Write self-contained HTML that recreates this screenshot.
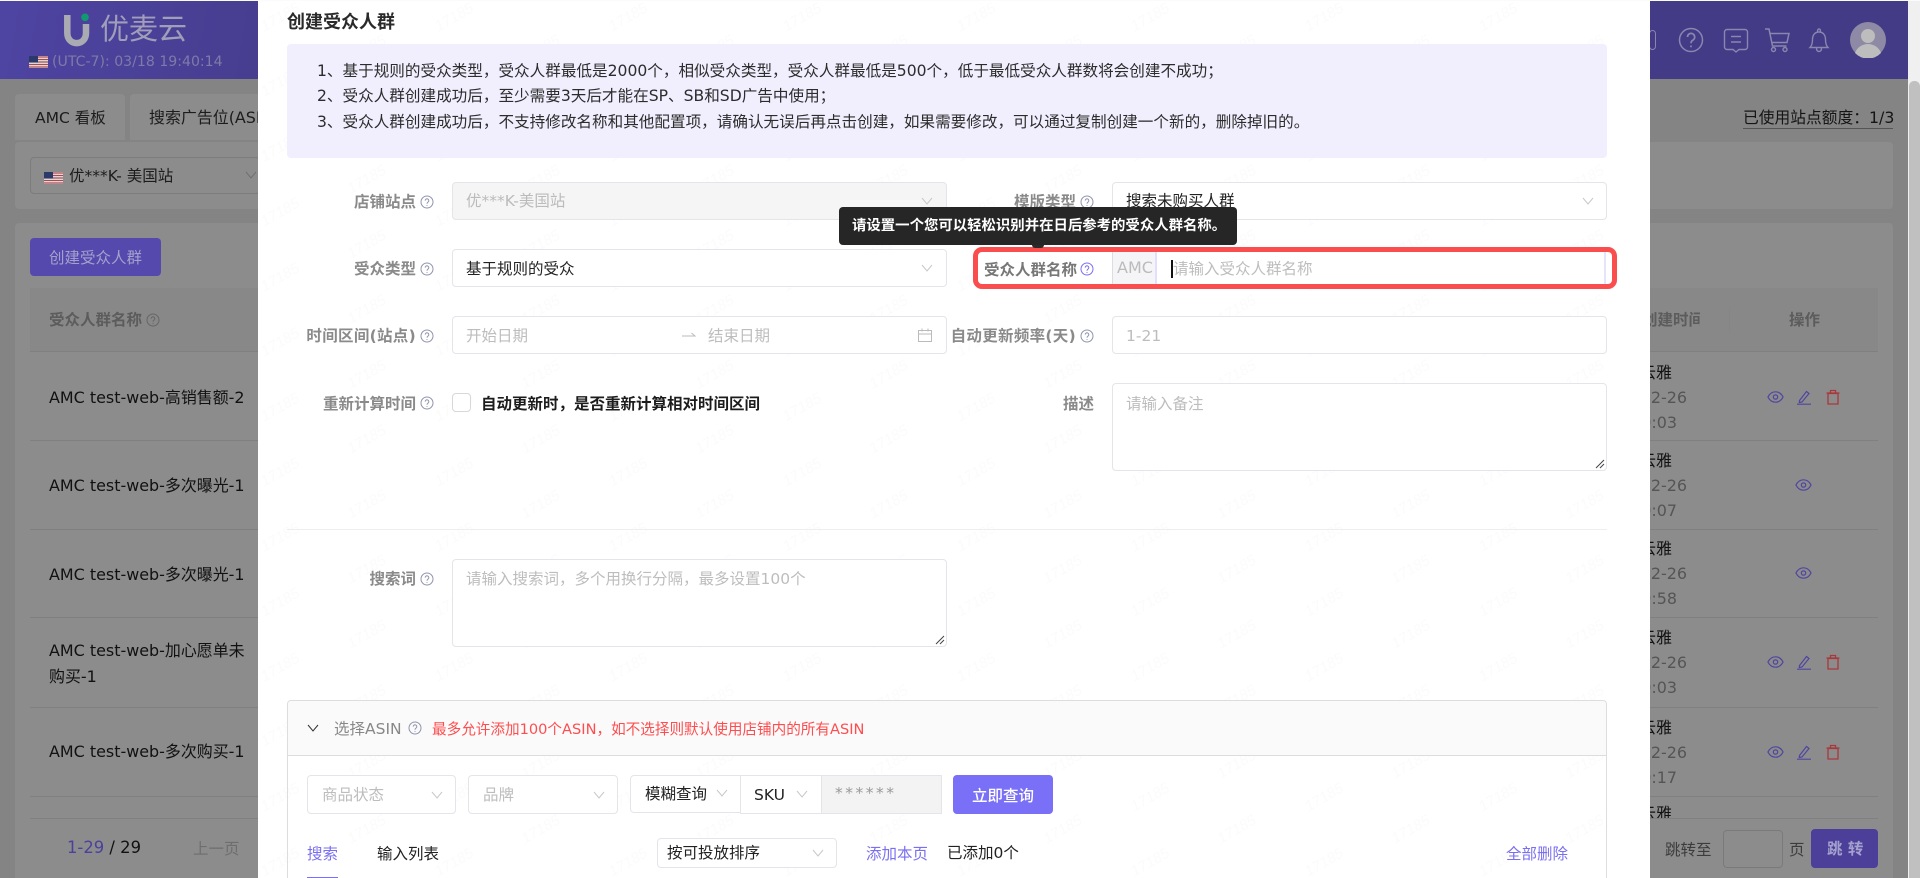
<!DOCTYPE html>
<html lang="zh"><head><meta charset="utf-8"><title>创建受众人群</title>
<style>
html,body{margin:0;padding:0;width:1920px;height:878px;overflow:hidden;background:#fff}
#r{position:relative;width:1920px;height:878px;overflow:hidden;font:15.5px/20px "DejaVu Sans","Noto Sans CJK SC",sans-serif;color:#222;filter:blur(.35px)}
#r div,#r svg{position:absolute}
.t{white-space:nowrap;height:20px}
.b{box-sizing:border-box;border:1px solid #e4e4ea;border-radius:4px;background:#fff}
.c{box-sizing:border-box;background:#8c8c8c;border-radius:4px}
.l{color:#8a8a8a;font-weight:700;text-align:right}
.g{color:#bdbdbd}
.k{color:#222}
.p{color:#7a6ff0}
.h{width:14px;height:14px;color:#8f94ae}
.v{width:14px;height:10px;color:#c8c8c8}
.d{color:#111;font-size:15.95px}
.e{color:#555;font-size:15.95px}
.hl{background:#808080;height:1px;left:30px;width:1848px}
</style></head><body>
<div id="r">
<svg width="0" height="0" style="position:absolute">
<defs>
<symbol id="q" viewBox="0 0 14 14"><circle cx="7" cy="7" r="6" fill="none" stroke="currentColor" stroke-width="1"/><path d="M5.2 5.6a1.8 1.8 0 1 1 2.8 1.5c-.7.5-1 .8-1 1.6M7 10v.9" fill="none" stroke="currentColor" stroke-width="1"/></symbol>
<symbol id="ch" viewBox="0 0 14 10"><path d="M2 2l5 6 5-6" fill="none" stroke="currentColor" stroke-width="1"/></symbol>
<symbol id="eye" viewBox="0 0 18 14"><path d="M1 7C3 3 6 1.5 9 1.5S15 3 17 7c-2 4-5 5.500-8 5.500S3 11 1 7z" fill="none" stroke="#4f45a0" stroke-width="1.300"/><circle cx="9" cy="7" r="2.300" fill="none" stroke="#4f45a0" stroke-width="1.300"/></symbol>
<symbol id="pen" viewBox="0 0 16 16"><path d="M3.500 11.500L10.500 2.500l2.500 2-7 8.500-2.700.5zM1 15.200h14" fill="none" stroke="#4f45a0" stroke-width="1.200"/></symbol>
<symbol id="tr" viewBox="0 0 16 16"><path d="M3 4.500h10V15H3zM1.500 4h13M5.500 4V1.500h5V4" fill="none" stroke="#a8383c" stroke-width="1.300"/></symbol>
<symbol id="fl" viewBox="0 0 19 12"><rect width="19" height="12" fill="#e8e8e8"/><path d="M0 1h19M0 3.500h19M0 6h19M0 8.500h19M0 11h19" stroke="#a84a50" stroke-width="1.200"/><rect width="9" height="6.500" fill="#2c3a6a"/></symbol>
<pattern id="wm" width="174" height="65" patternUnits="userSpaceOnUse" patternTransform="translate(236.5 131)">
<text x="43.5" y="21" text-anchor="middle" transform="rotate(-30 43.5 16)" font-family="Liberation Sans" font-size="15" font-style="italic" fill="#fbfbfb">17185</text>
<text x="130.5" y="53" text-anchor="middle" transform="rotate(-30 130.5 49)" font-family="Liberation Sans" font-size="15" font-style="italic" fill="#fbfbfb">17185</text>
</pattern>
</defs></svg>

<!-- background page -->
<div style="left:0;top:0;width:1920px;height:878px;background:#848484"></div>
<div style="left:0;top:1px;width:1908px;height:78px;background:linear-gradient(100deg,#4e44a2 0%,#473e90 14%,#433b85 60%,#433b85 100%)"></div>
<svg style="left:60px;top:12px" width="34" height="36" viewBox="60 12 34 36"><path d="M67.300 15V33C67.300 46.500 86 46.500 86 33V24" fill="none" stroke="#aaaab2" stroke-width="6.500"/><circle cx="85" cy="17.300" r="3.800" fill="#0f9a70"/></svg>
<div class="t" style="left:100px;top:14px;height:30px;font-size:29px;line-height:30px;color:#a19eb9">优麦云</div>
<svg style="left:29px;top:56px" width="19" height="12"><use href="#fl"/></svg>
<div class="t" style="left:52px;top:52px;font-size:14.100px;color:#7f7aa9">(UTC-7): 03/18 19:40:14</div>
<div style="left:1649px;top:30px;width:7px;height:20px;border:1.500px solid #8a86b0;border-radius:8px;box-sizing:border-box"></div>
<svg style="left:1678px;top:27px" width="26" height="26" viewBox="0 0 26 26"><circle cx="13" cy="13" r="11.500" fill="none" stroke="#8a86b0" stroke-width="1.500"/><path d="M9.500 10a3.600 3.600 0 1 1 5.600 3c-1.500.9-2.100 1.600-2.100 3.200M13 18.500v1.700" fill="none" stroke="#8a86b0" stroke-width="1.700"/></svg>
<svg style="left:1723px;top:28px" width="26" height="26" viewBox="0 0 26 26"><path d="M4 1.500h18a2.500 2.500 0 0 1 2.500 2.500v15a2.500 2.500 0 0 1-2.500 2.500h-6l-3 2.500-3-2.500H4A2.500 2.500 0 0 1 1.500 19V4A2.500 2.500 0 0 1 4 1.500zM8 8.500h10M8 14h10" fill="none" stroke="#8a86b0" stroke-width="1.400"/></svg>
<svg style="left:1764px;top:27px" width="26" height="26" viewBox="0 0 26 26"><path d="M1 2h4l3.500 17h14M6 6.500h19l-2 9H8" fill="none" stroke="#8a86b0" stroke-width="1.500"/><circle cx="9.500" cy="22.500" r="2" fill="none" stroke="#8a86b0" stroke-width="1.400"/><circle cx="21" cy="22.500" r="2" fill="none" stroke="#8a86b0" stroke-width="1.400"/></svg>
<svg style="left:1808px;top:28px" width="22" height="25" viewBox="0 0 22 25"><path d="M2 19.500c2-2 2.500-4 2.500-8 0-4.500 2.500-7.500 6.500-7.500s6.500 3 6.500 7.500c0 4 .5 6 2.500 8zM9.500 3.500C9.500 2 10 1 11 1s1.500 1 1.500 2.500M8.500 20c0 2.500 1 3.500 2.500 3.500s2.500-1 2.500-3.500" fill="none" stroke="#8a86b0" stroke-width="1.400"/></svg>
<svg style="left:1850px;top:22px" width="36" height="36" viewBox="0 0 36 36"><circle cx="18" cy="18" r="18" fill="#8e8aa6"/><circle cx="18" cy="14" r="7" fill="#bdbdbd"/><path d="M5 31c2-6 8-9 13-9s11 3 13 9a18 18 0 0 1-26 0z" fill="#bdbdbd"/></svg>

<div class="c" style="left:15px;top:94px;width:110px;height:46px;border-radius:4px 4px 0 0"></div>
<div class="t k" style="left:35px;top:108px;color:#1c1c1c">AMC 看板</div>
<div class="c" style="left:130px;top:94px;width:300px;height:46px;border-radius:4px 4px 0 0"></div>
<div class="t k" style="left:149px;top:108px;color:#1c1c1c;font-size:15.95px">搜索广告位(ASIN)</div>
<div class="t" style="left:1743px;top:108px;color:#151515;border-bottom:1px solid #555;height:20px;width:150px;font-size:15.75px">已使用站点额度：1/3</div>
<div class="c" style="left:15px;top:142px;width:1878px;height:67px"></div>
<div style="left:30px;top:157px;width:230px;height:37px;border:1px solid #7c7c7c;border-radius:4px;box-sizing:border-box"></div>
<svg style="left:44px;top:172px" width="19" height="12"><use href="#fl"/></svg>
<div class="t" style="left:69px;top:166px;color:#1c1c1c">优***K- 美国站</div>
<svg class="v" style="left:244px;top:170px;color:#707070"><use href="#ch"/></svg>
<div class="c" style="left:15px;top:223px;width:1878px;height:655px"></div>
<div style="left:30px;top:238px;width:131px;height:38px;background:#5549ad;border-radius:4px"></div>
<div class="t" style="left:49px;top:248px;color:#a5a1cd">创建受众人群</div>
<div style="left:30px;top:288px;width:1848px;height:63px;background:#888"></div>
<div class="hl" style="top:351px"></div>
<div class="t" style="left:49px;top:310px;color:#5c5c5c;font-weight:700">受众人群名称</div>
<svg class="h" style="left:146px;top:313px;color:#666"><use href="#q"/></svg>
<div class="t" style="left:1650px;top:310px;color:#5c5c5c;font-weight:700;width:50px;overflow:hidden"><span style="margin-left:-8px">创建时间</span></div>
<div style="left:1729px;top:308px;width:1px;height:24px;background:#858585"></div>
<div class="t" style="left:1789px;top:310px;color:#5c5c5c;font-weight:700">操作</div>

<div class="t d" style="left:49px;top:388px">AMC test-web-高销售额-2</div><div class="hl" style="top:440px"></div>
<div class="t d" style="left:49px;top:476px">AMC test-web-多次曝光-1</div><div class="hl" style="top:529px"></div>
<div class="t d" style="left:49px;top:565px">AMC test-web-多次曝光-1</div><div class="hl" style="top:617px"></div>
<div class="t d" style="left:49px;top:641px">AMC test-web-加心愿单未</div>
<div class="t d" style="left:49px;top:667px">购买-1</div><div class="hl" style="top:707px"></div>
<div class="t d" style="left:49px;top:742px">AMC test-web-多次购买-1</div><div class="hl" style="top:796px"></div>

<div class="t d" style="right:248px;top:363px">张云雅</div><div class="t e" style="right:233px;top:388px">2025-02-26</div><div class="t e" style="right:243px;top:413px">10:50:03</div>
<div class="t d" style="right:248px;top:451px">张云雅</div><div class="t e" style="right:233px;top:476px">2025-02-26</div><div class="t e" style="right:243px;top:501px">10:50:07</div>
<div class="t d" style="right:248px;top:539px">张云雅</div><div class="t e" style="right:233px;top:564px">2025-02-26</div><div class="t e" style="right:243px;top:589px">10:49:58</div>
<div class="t d" style="right:248px;top:628px">张云雅</div><div class="t e" style="right:233px;top:653px">2025-02-26</div><div class="t e" style="right:243px;top:678px">10:50:03</div>
<div class="t d" style="right:248px;top:718px">张云雅</div><div class="t e" style="right:233px;top:743px">2025-02-26</div><div class="t e" style="right:243px;top:768px">10:50:17</div>
<div class="t d" style="right:248px;top:804px">张云雅</div>

<svg style="left:1767px;top:390px" width="17" height="14"><use href="#eye"/></svg><svg style="left:1796px;top:389px" width="16" height="16"><use href="#pen"/></svg><svg style="left:1825px;top:389px" width="16" height="16"><use href="#tr"/></svg>
<svg style="left:1795px;top:478px" width="17" height="14"><use href="#eye"/></svg>
<svg style="left:1795px;top:566px" width="17" height="14"><use href="#eye"/></svg>
<svg style="left:1767px;top:655px" width="17" height="14"><use href="#eye"/></svg><svg style="left:1796px;top:654px" width="16" height="16"><use href="#pen"/></svg><svg style="left:1825px;top:654px" width="16" height="16"><use href="#tr"/></svg>
<svg style="left:1767px;top:745px" width="17" height="14"><use href="#eye"/></svg><svg style="left:1796px;top:744px" width="16" height="16"><use href="#pen"/></svg><svg style="left:1825px;top:744px" width="16" height="16"><use href="#tr"/></svg>

<div style="left:15px;top:818px;width:1878px;height:60px;background:#8c8c8c"></div>
<div class="hl" style="top:818px"></div>
<div class="t" style="left:67px;top:838px;color:#111;font-size:16.4px"><span style="color:#4b419c">1-29</span> / 29</div>
<div class="t" style="left:193px;top:839px;color:#6e6e6e">上一页</div>
<div class="t" style="left:1665px;top:840px;color:#3c3c3c">跳转至</div>
<div style="left:1723px;top:830px;width:60px;height:38px;border:1px solid #7a7a7a;border-radius:4px;box-sizing:border-box"></div>
<div class="t" style="left:1789px;top:840px;color:#3c3c3c">页</div>
<div style="left:1811px;top:829px;width:67px;height:39px;background:#4b3f9a;border-radius:4px"></div>
<div class="t" style="left:1827px;top:839px;color:#a5a1cd;font-weight:700">跳 转</div>

<!-- modal -->
<div style="left:258px;top:0;width:1392px;height:878px;background:#fff"></div>
<svg style="left:0;top:0" width="1920" height="878"><rect x="258" y="0" width="1392" height="878" fill="url(#wm)"/></svg>
<div class="t" style="left:287px;top:13px;font-size:18px;font-weight:700;color:#2a2a2a">创建受众人群</div>
<div style="left:287px;top:44px;width:1320px;height:114px;background:#f1effe;border-radius:4px"></div>
<div class="t" style="left:317px;top:61px;color:#2c2c2c;font-size:15.6px">1、基于规则的受众类型，受众人群最低是2000个，相似受众类型，受众人群最低是500个，低于最低受众人群数将会创建不成功；</div>
<div class="t" style="left:317px;top:86px;color:#2c2c2c;font-size:15.6px">2、受众人群创建成功后，至少需要3天后才能在SP、SB和SD广告中使用；</div>
<div class="t" style="left:317px;top:112px;color:#2c2c2c;font-size:15.6px">3、受众人群创建成功后，不支持修改名称和其他配置项，请确认无误后再点击创建，如果需要修改，可以通过复制创建一个新的，删除掉旧的。</div>

<div class="t l" style="right:1504px;top:192px">店铺站点</div><svg class="h" style="left:420px;top:195px"><use href="#q"/></svg>
<div class="b" style="left:452px;top:182px;width:495px;height:38px;background:#f5f5f5"></div>
<div class="t" style="left:466px;top:191px;color:#bbb">优***K-美国站</div>
<svg class="v" style="left:920px;top:196px"><use href="#ch"/></svg>

<div class="t l" style="right:844px;top:192px">模版类型</div><svg class="h" style="left:1080px;top:195px"><use href="#q"/></svg>
<div class="b" style="left:1112px;top:182px;width:495px;height:38px"></div>
<div class="t k" style="left:1126px;top:191px">搜索未购买人群</div>
<svg class="v" style="left:1581px;top:196px"><use href="#ch"/></svg>

<div class="t l" style="right:1504px;top:259px">受众类型</div><svg class="h" style="left:420px;top:262px"><use href="#q"/></svg>
<div class="b" style="left:452px;top:249px;width:495px;height:38px"></div>
<div class="t k" style="left:466px;top:259px">基于规则的受众</div>
<svg class="v" style="left:920px;top:263px"><use href="#ch"/></svg>

<div style="left:973px;top:247px;width:644px;height:42px;box-sizing:border-box;border:5px solid #fa4d4d;border-radius:9px;background:#fff"></div>
<div class="t" style="left:984px;top:260px;color:#777;font-weight:700">受众人群名称</div>
<svg class="h" style="left:1080px;top:262px;color:#7a6ff0"><use href="#q"/></svg>
<div style="left:1112px;top:252px;width:45px;height:32px;background:#f5f5f7;border-left:1px solid #dcdce4;border-right:2px solid #e2dffc;box-sizing:border-box"></div>
<div class="t" style="left:1117px;top:258px;color:#bbb;font-size:16px">AMC</div>
<div class="t g" style="left:1173px;top:259px">请输入受众人群名称</div>
<div style="left:1171px;top:260px;width:2px;height:18px;background:#111"></div>
<div style="left:1604px;top:252px;width:2px;height:32px;background:#e6e3fc"></div>

<div style="left:839px;top:207px;width:398px;height:38px;background:#262626;border-radius:4px"></div>
<div class="t" style="left:852px;top:216px;font-size:14.4px;color:#fff;font-weight:700">请设置一个您可以轻松识别并在日后参考的受众人群名称。</div>
<div style="left:1032px;top:245px;width:12px;height:3px;background:#2a2a2a;border-radius:0 0 5px 5px"></div>

<div class="t l" style="right:1504px;top:326px;letter-spacing:.3px">时间区间(站点)</div><svg class="h" style="left:420px;top:329px"><use href="#q"/></svg>
<div class="b" style="left:452px;top:316px;width:495px;height:38px"></div>
<div class="t g" style="left:466px;top:326px">开始日期</div>
<svg style="left:682px;top:330px" width="14" height="10"><path d="M0 6h13L9.500 3" fill="none" stroke="#bbb"/></svg>
<div class="t g" style="left:708px;top:326px">结束日期</div>
<svg style="left:918px;top:328px" width="14" height="14" viewBox="0 0 14 14"><path d="M.5 2.500h13v11H.5zM.5 6h13M4 .5v3M10 .5v3" fill="none" stroke="#bbb"/></svg>

<div class="t l" style="right:844px;top:326px;letter-spacing:.3px">自动更新频率(天)</div><svg class="h" style="left:1080px;top:329px"><use href="#q"/></svg>
<div class="b" style="left:1112px;top:316px;width:495px;height:38px"></div>
<div class="t g" style="left:1126px;top:326px">1-21</div>

<div class="t l" style="right:1504px;top:394px">重新计算时间</div><svg class="h" style="left:420px;top:396px"><use href="#q"/></svg>
<div class="b" style="left:452px;top:393px;width:19px;height:19px;border-color:#d8d8d8"></div>
<div class="t" style="left:481px;top:394px;font-weight:700;color:#1c1c1c">自动更新时，是否重新计算相对时间区间</div>

<div class="t l" style="right:826px;top:394px">描述</div>
<div class="b" style="left:1112px;top:383px;width:495px;height:88px"></div>
<div class="t g" style="left:1126px;top:394px">请输入备注</div>
<svg style="left:1595px;top:459px" width="10" height="10"><path d="M9 1L1 9M9 5L5 9" stroke="#444" stroke-width="1"/></svg>

<div style="left:287px;top:529px;width:1320px;height:1px;background:#eee"></div>

<div class="t l" style="right:1504px;top:569px">搜索词</div><svg class="h" style="left:420px;top:572px"><use href="#q"/></svg>
<div class="b" style="left:452px;top:559px;width:495px;height:88px"></div>
<div class="t g" style="left:466px;top:569px">请输入搜索词，多个用换行分隔，最多设置100个</div>
<svg style="left:935px;top:635px" width="10" height="10"><path d="M9 1L1 9M9 5L5 9" stroke="#444" stroke-width="1"/></svg>

<div style="left:287px;top:700px;width:1320px;height:200px;box-sizing:border-box;border:1px solid #ddd;border-radius:4px"></div>
<div style="left:288px;top:701px;width:1318px;height:55px;background:#fafafa;border-bottom:1px solid #ddd;border-radius:4px 4px 0 0;box-sizing:border-box"></div>
<svg class="v" style="left:306px;top:723px;color:#333"><use href="#ch"/></svg>
<div class="t" style="left:334px;top:719px;color:#888">选择ASIN</div>
<svg class="h" style="left:408px;top:721px"><use href="#q"/></svg>
<div class="t" style="left:432px;top:720px;font-size:14.6px;color:#ff4d4f">最多允许添加100个ASIN，如不选择则默认使用店铺内的所有ASIN</div>

<div class="b" style="left:307px;top:775px;width:149px;height:39px"></div>
<div class="t g" style="left:322px;top:785px">商品状态</div>
<svg class="v" style="left:430px;top:790px"><use href="#ch"/></svg>
<div class="b" style="left:468px;top:775px;width:150px;height:39px"></div>
<div class="t g" style="left:483px;top:785px">品牌</div>
<svg class="v" style="left:592px;top:790px"><use href="#ch"/></svg>
<div class="b" style="left:630px;top:775px;width:111px;height:38px;border-radius:4px 0 0 4px"></div>
<div class="t k" style="left:645px;top:784px">模糊查询</div>
<svg class="v" style="left:715px;top:788px"><use href="#ch"/></svg>
<div class="b" style="left:740px;top:775px;width:82px;height:39px;border-radius:0"></div>
<div class="t k" style="left:754px;top:785px">SKU</div>
<svg class="v" style="left:795px;top:789px"><use href="#ch"/></svg>
<div class="b" style="left:821px;top:775px;width:121px;height:39px;background:#f3f3f3;border-radius:0"></div>
<div class="t" style="left:835px;top:783px;color:#999;letter-spacing:2.5px">******</div>
<div style="left:953px;top:775px;width:100px;height:39px;background:#7a6ff7;border-radius:4px"></div>
<div class="t" style="left:972px;top:786px;color:#fff;font-weight:500">立即查询</div>

<div class="t p" style="left:307px;top:844px">搜索</div>
<div style="left:307px;top:877px;width:31px;height:1px;background:#7a6ff0"></div>
<div class="t k" style="left:377px;top:844px">输入列表</div>
<div class="b" style="left:657px;top:838px;width:180px;height:30px"></div>
<div class="t k" style="left:667px;top:843px">按可投放排序</div>
<svg class="v" style="left:811px;top:848px"><use href="#ch"/></svg>
<div class="t p" style="left:866px;top:844px">添加本页</div>
<div class="t k" style="left:947px;top:843px">已添加0个</div>
<div class="t p" style="left:1506px;top:844px">全部删除</div>

<!-- scrollbar -->
<div style="left:1908px;top:1px;width:12px;height:877px;background:#f0f0f0"></div>
<div style="left:1909px;top:81px;width:11px;height:797px;background:#c0c0c0;border-radius:5px 5px 0 0"></div>
<div style="left:0;top:0;width:1920px;height:1px;background:#fbfbfb"></div>
</div>
</body></html>
